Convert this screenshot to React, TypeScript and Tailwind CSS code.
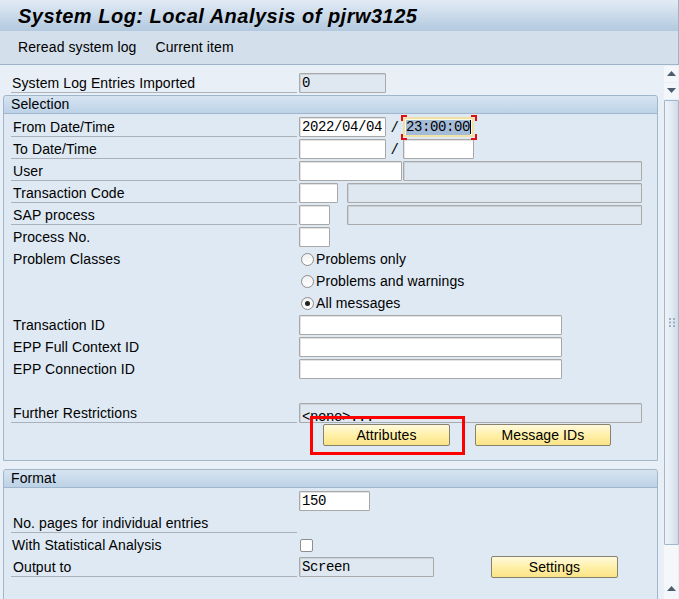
import React from "react";

const F = "font-['Liberation_Mono',monospace] text-[14px] tracking-[-0.4px]";

function Field({ w, disabled, children, className = "" }: { w: string; disabled?: boolean; children?: React.ReactNode; className?: string }) {
  return (
    <div
      className={`${w} h-[20px] mt-[1px] rounded-[1px] border flex items-center pl-[2px] overflow-hidden whitespace-nowrap ${F} ${
        disabled
          ? "bg-[#dfe8f1] border-[#aaaaaa] shadow-[inset_1px_1px_0_#c9d1d9]"
          : "bg-white border-[#a8a8a8] shadow-[inset_1px_1px_0_#e2e2e2]"
      } ${className}`}
    >
      {children}
    </div>
  );
}

function Row({ label, underline, children, textPl = "pl-[2px]" }: { label?: string; underline?: boolean; children?: React.ReactNode; textPl?: string }) {
  return (
    <div className="flex h-[22px]">
      <div
        className={`w-[286px] h-[21px] ${textPl} pt-[2px] flex items-center whitespace-nowrap ${
          underline ? "border-b border-[#aab1b8]" : ""
        }`}
      >
        {label}
      </div>
      <div className="flex items-start ml-[2px]">{children}</div>
    </div>
  );
}

function Radio({ checked, label }: { checked?: boolean; label: string }) {
  return (
    <div className="flex items-center h-[22px]">
      <div className="ml-[2px] w-[13px] h-[13px] rounded-full border border-[#8e8e8e] bg-gradient-to-b from-[#f0f0f0] to-white flex items-center justify-center">
        {checked && <div className="w-[5px] h-[5px] rounded-full bg-[#222]" />}
      </div>
      <span className="ml-[2px] pt-[1px] whitespace-nowrap">{label}</span>
    </div>
  );
}

function Btn({ w, children, className = "" }: { w: string; children: React.ReactNode; className?: string }) {
  return (
    <div
      className={`${w} h-[22px] rounded-[2px] border border-[#85836f] bg-gradient-to-b from-[#fff9dc] via-[#fff0a8] to-[#fbe386] flex items-center justify-center whitespace-nowrap ${className}`}
    >
      {children}
    </div>
  );
}

function Group({ title, children, className = "" }: { title: string; children: React.ReactNode; className?: string }) {
  return (
    <div className={`ml-[3px] w-[655px] border border-[#a0b6cb] rounded-t-[3px] bg-[#dee9f3] ${className}`}>
      <div className="h-[18px] bg-gradient-to-b from-[#d6e4f1] to-[#bdd2e7] border-b border-[#a0b6cb] pl-[7px] flex items-center rounded-t-[3px]">
        {title}
      </div>
      {children}
    </div>
  );
}

export default function App() {
  return (
    <div className="relative w-[679px] h-[599px] overflow-hidden bg-[#e9eff6] text-[14px] tracking-[0.1px] text-black font-['Liberation_Sans',Arial,sans-serif]">
      {/* Title */}
      <div className="h-[31px] bg-gradient-to-b from-[#e2ebf5] to-[#b3c9df] border-r border-[#9fb3c8] flex items-center pl-[18px]">
        <span className="text-[20px] font-bold italic tracking-[0.5px] leading-none">System Log: Local Analysis of pjrw3125</span>
      </div>
      {/* Toolbar */}
      <div className="h-[34px] bg-[#d3dfea] border-b border-r border-[#9fb3c8] flex items-center pl-[18px] pb-[1px]">
        <span>Reread system log</span>
        <span className="ml-[19px]">Current item</span>
      </div>

      <div className="flex h-[534px]">
        <div className="w-[663px] pt-[7px]">
          <div className="pl-[11px]">
            <Row label="System Log Entries Imported" underline textPl="pl-[1px]">
              <Field w="w-[87px]" disabled>0</Field>
            </Row>
          </div>

          <Group title="Selection" className="mt-[1px]">
            <div className="pl-[7px] pt-[2px] pb-[14px]">
              <Row label="From Date/Time" underline>
                <Field w="w-[87px]">2022/04/04</Field>
                <span className={`w-[17px] text-center mt-[2px] ${F}`}>/</span>
                <div className="relative">
                  <div className={`w-[71px] h-[20px] mt-[1px] rounded-[1px] border-2 border-[#efe2a6] bg-[#fbf7e3] flex items-center pl-[1px] ${F}`}>
                    <span className="bg-[#a5bcd8] leading-[15px]">23:00:00</span>
                    <span className="w-[1px] h-[14px] bg-black" />
                  </div>
                  <span className="absolute left-[-2px] top-[-1px] w-[6px] h-[6px] border-t-2 border-l-2 border-[#e01010]" />
                  <span className="absolute right-[-3px] top-[-1px] w-[6px] h-[6px] border-t-2 border-r-2 border-[#e01010]" />
                  <span className="absolute left-[-2px] bottom-[-3px] w-[6px] h-[6px] border-b-2 border-l-2 border-[#e01010]" />
                  <span className="absolute right-[-3px] bottom-[-3px] w-[6px] h-[6px] border-b-2 border-r-2 border-[#e01010]" />
                </div>
              </Row>
              <Row label="To Date/Time" underline>
                <Field w="w-[87px]" />
                <span className={`w-[17px] text-center mt-[2px] ${F}`}>/</span>
                <Field w="w-[71px]" />
              </Row>
              <Row label="User" underline>
                <Field w="w-[103px]" />
                <Field w="w-[239px]" disabled className="ml-[1px]" />
              </Row>
              <Row label="Transaction Code" underline>
                <Field w="w-[39px]" />
                <Field w="w-[295px]" disabled className="ml-[9px]" />
              </Row>
              <Row label="SAP process" underline>
                <Field w="w-[31px]" />
                <Field w="w-[295px]" disabled className="ml-[17px]" />
              </Row>
              <Row label="Process No.">
                <Field w="w-[31px]" />
              </Row>
              <Row label="Problem Classes">
                <Radio label="Problems only" />
              </Row>
              <Row>
                <Radio label="Problems and warnings" />
              </Row>
              <Row>
                <Radio checked label="All messages" />
              </Row>
              <Row label="Transaction ID">
                <Field w="w-[263px]" />
              </Row>
              <Row label="EPP Full Context ID">
                <Field w="w-[263px]" />
              </Row>
              <Row label="EPP Connection ID">
                <Field w="w-[263px]" />
              </Row>
              <Row />
              <Row label="Further Restrictions" underline>
                <Field w="w-[343px]" disabled>
                  <span className="mt-[8px]">&lt;none&gt;...</span>
                </Field>
              </Row>
              <div className="flex h-[22px] pl-[312px]">
                <Btn w="w-[127px]">Attributes</Btn>
                <Btn w="w-[136px]" className="ml-[25px]">Message IDs</Btn>
              </div>
            </div>
          </Group>

          <Group title="Format" className="mt-[8px]">
            <div className="pl-[7px] pt-[2px] pb-[40px]">
              <Row>
                <Field w="w-[71px]">150</Field>
              </Row>
              <Row label="No. pages for individual entries" underline />
              <Row label="With Statistical Analysis" textPl="pl-[1px]">
                <div className="ml-[1px] mt-[5px] w-[13px] h-[13px] rounded-[2px] border border-[#8e8e8e] bg-white" />
              </Row>
              <Row label="Output to" underline>
                <Field w="w-[135px]" disabled>Screen</Field>
                <Btn w="w-[127px]" className="ml-[57px]">Settings</Btn>
              </Row>
            </div>
          </Group>
        </div>

        {/* Scrollbar */}
        <div className="w-[16px] flex flex-col pt-[1px]">
          <div className="w-[14px] h-[16px] ml-[1px] bg-[#f3f6fa] flex items-center justify-center">
            <svg width="9" height="5" viewBox="0 0 9 5"><path d="M0 5 L4.5 0 L9 5 Z" fill="#4d5d6e" /></svg>
          </div>
          <div className="w-[14px] h-[16px] ml-[1px] mt-[1px] bg-[#f3f6fa] flex items-center justify-center">
            <svg width="9" height="5" viewBox="0 0 9 5"><path d="M0 0 L9 0 L4.5 5 Z" fill="#4d5d6e" /></svg>
          </div>
          <div className="w-[15px] h-[450px] ml-[1px] mt-[1px] border border-[#a3b6ca] rounded-[1px] bg-gradient-to-r from-[#eef3f8] via-[#e2eaf3] to-[#cfdbe8] flex items-center justify-center">
            <svg width="6" height="9" viewBox="0 0 6 9">
              <rect x="0" y="0" width="2" height="2" fill="#9fb0c2" />
              <rect x="4" y="0" width="2" height="2" fill="#9fb0c2" />
              <rect x="0" y="3.5" width="2" height="2" fill="#9fb0c2" />
              <rect x="4" y="3.5" width="2" height="2" fill="#9fb0c2" />
              <rect x="0" y="7" width="2" height="2" fill="#9fb0c2" />
              <rect x="4" y="7" width="2" height="2" fill="#9fb0c2" />
            </svg>
          </div>
          <div className="w-[14px] h-[38px] ml-[1px] bg-[#f5f8fb]" />
          <div className="w-[14px] h-[16px] ml-[1px] bg-[#f3f6fa] flex justify-center pt-[3px]">
            <svg width="9" height="5" viewBox="0 0 9 5"><path d="M0 5 L4.5 0 L9 5 Z" fill="#4d5d6e" /></svg>
          </div>
        </div>
      </div>

      {/* Red annotation box */}
      <div className="absolute left-[310px] top-[416px] w-[155px] h-[39px] border-[3px] border-[#ff0000]" />
    </div>
  );
}
